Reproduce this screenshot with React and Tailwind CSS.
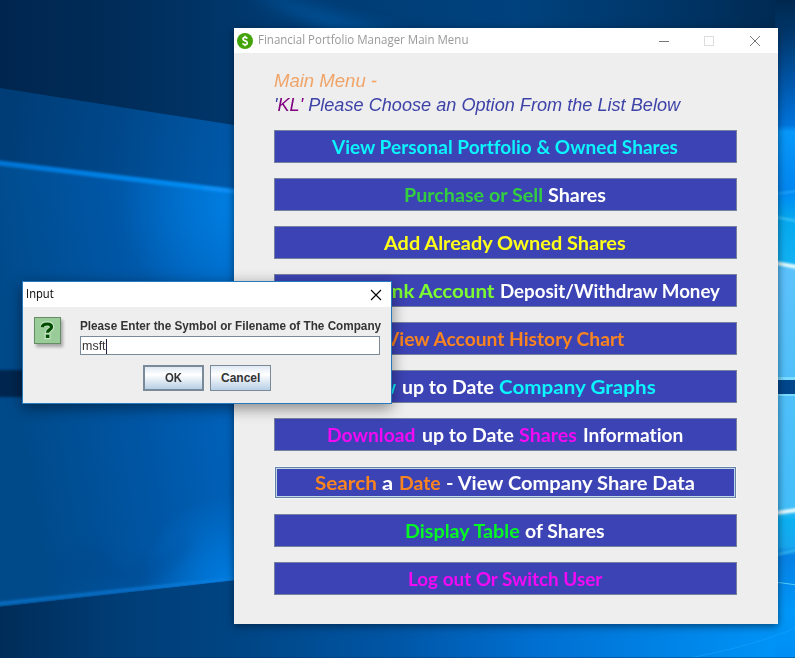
import { useLayoutEffect, useRef, useState } from "react";

// Scales a line of text horizontally so that it fills the given width.
function FitText({ width, className = "", children }) {
  const ref = useRef(null);
  const [scale, setScale] = useState(1);
  useLayoutEffect(() => {
    const measure = () => {
      const natural = ref.current?.offsetWidth;
      if (natural) setScale(width / natural);
    };
    measure();
    document.fonts?.ready.then(measure);
  }, [width]);
  return (
    <span className="inline-block text-left" style={{ width }}>
      <span
        ref={ref}
        className={`inline-block origin-left whitespace-pre ${className}`}
        style={{ transform: `scaleX(${scale})` }}
      >
        {children}
      </span>
    </span>
  );
}

const C = {
  cyan: "text-[#0cf4fe]",
  green: "text-[#32cd40]",
  white: "text-white",
  yellow: "text-[#ffff18]",
  lawn: "text-[#7cfc30]",
  orange: "text-[#fa8420]",
  magenta: "text-[#f20af4]",
  lime: "text-[#04f824]",
};

const options = [
  { parts: [["View Personal Portfolio & Owned Shares", C.cyan, 346]] },
  { parts: [["Purchase or Sell", C.green, 139], ["Shares", C.white, 58]] },
  { parts: [["Add Already Owned Shares", C.yellow, 242]] },
  { parts: [["Manage Bank Account", C.lawn, 204], ["Deposit/Withdraw Money", C.white, 220]] },
  { parts: [["View Account History Chart", C.orange, 238]] },
  { parts: [["View", C.cyan, 42], ["up to Date", C.white, 92], ["Company Graphs", C.cyan, 157]] },
  { parts: [["Download", C.magenta, 89], ["up to Date", C.white, 92], ["Shares", C.magenta, 58], ["Information", C.white, 100]] },
  { parts: [["Search", C.orange, 62], ["a", C.white, 11], ["Date", C.orange, 42], ["- View Company Share Data", C.white, 249]], focused: true },
  { parts: [["Display Table", C.lime, 115], ["of Shares", C.white, 80]] },
  { parts: [["Log out Or Switch User", C.magenta, 194]] },
];

function Option({ parts, focused }) {
  return (
    <button
      className={`flex w-[463px] items-center justify-center gap-[5.5px] bg-[#3c43b4] pr-px font-[Lato,sans-serif] text-[18px] leading-[26px] font-bold [font-variant-ligatures:none] ${
        focused
          ? "h-[33px] border border-[#f4f6f8] shadow-[inset_0_0_0_1px_#6382a5,inset_0_0_0_2px_#c3d6e8]"
          : "h-[33px] border border-[#75819e]"
      }`}
    >
      {parts.map(([text, color, width]) => (
        <FitText key={text} width={width} className={color}>
          {text}
        </FitText>
      ))}
    </button>
  );
}

function Wallpaper() {
  return (
    <svg className="absolute inset-0" width="795" height="658" viewBox="0 0 795 658">
      <defs>
        <linearGradient id="sky" x1="0" x2="1" y1="0" y2="0">
          <stop offset="0" stopColor="#00264f" />
          <stop offset=".15" stopColor="#002c59" />
          <stop offset=".35" stopColor="#003b72" />
          <stop offset=".65" stopColor="#00427e" />
          <stop offset=".85" stopColor="#003566" />
          <stop offset="1" stopColor="#00284f" />
        </linearGradient>
        <linearGradient id="beam" gradientUnits="userSpaceOnUse" x1="0" y1="130" x2="240" y2="160">
          <stop offset="0" stopColor="#003c75" />
          <stop offset=".5" stopColor="#00488b" />
          <stop offset="1" stopColor="#005aab" />
        </linearGradient>
        <linearGradient id="main" gradientUnits="userSpaceOnUse" x1="0" y1="300" x2="240" y2="260">
          <stop offset="0" stopColor="#004a8a" />
          <stop offset=".5" stopColor="#0056a5" />
          <stop offset="1" stopColor="#0066c2" />
        </linearGradient>
        <radialGradient id="glow" gradientUnits="userSpaceOnUse" cx="240" cy="205" r="120">
          <stop offset="0" stopColor="#0084ea" stopOpacity=".85" />
          <stop offset="1" stopColor="#0084ea" stopOpacity="0" />
        </radialGradient>
        <radialGradient id="glowLow" gradientUnits="userSpaceOnUse" cx="230" cy="585" r="90">
          <stop offset="0" stopColor="#0085ee" stopOpacity=".8" />
          <stop offset="1" stopColor="#0085ee" stopOpacity="0" />
        </radialGradient>
        <linearGradient id="edge" gradientUnits="userSpaceOnUse" x1="0" x2="240" y1="0" y2="0">
          <stop offset="0" stopColor="#0074d4" />
          <stop offset="1" stopColor="#0890f8" />
        </linearGradient>
        <linearGradient id="floor" x1="0" x2="1" y1="0" y2="0">
          <stop offset="0" stopColor="#002c58" />
          <stop offset=".15" stopColor="#003d76" />
          <stop offset=".3" stopColor="#004584" />
          <stop offset=".5" stopColor="#0056a6" />
          <stop offset=".68" stopColor="#0070d2" />
          <stop offset="1" stopColor="#0096fa" />
        </linearGradient>
        <linearGradient id="right" x1="0" x2="0" y1="0" y2="1">
          <stop offset="0" stopColor="#00284f" />
          <stop offset=".045" stopColor="#003567" />
          <stop offset=".12" stopColor="#0055a6" />
          <stop offset=".19" stopColor="#0074dc" />
          <stop offset=".2" stopColor="#0798fa" />
          <stop offset=".29" stopColor="#0386f0" />
          <stop offset=".3" stopColor="#0090f4" />
          <stop offset=".335" stopColor="#06a9ee" />
          <stop offset=".4" stopColor="#12b2f4" />
          <stop offset=".41" stopColor="#5cc2fc" />
          <stop offset=".77" stopColor="#44bef9" />
          <stop offset=".79" stopColor="#0cb1f2" />
          <stop offset=".83" stopColor="#18a8ef" />
          <stop offset=".845" stopColor="#0781e4" />
          <stop offset=".93" stopColor="#0098fa" />
          <stop offset="1" stopColor="#008ef4" />
        </linearGradient>
        <filter id="soft" filterUnits="userSpaceOnUse" x="-20" y="0" width="840" height="658">
          <feGaussianBlur stdDeviation="1.2" />
        </filter>
        <filter id="haze" filterUnits="userSpaceOnUse" x="-20" y="-40" width="840" height="740">
          <feGaussianBlur stdDeviation="7" />
        </filter>
      </defs>
      <rect width="795" height="658" fill="url(#sky)" />
      <path d="M245 -8 L300 2 L410 36 L340 36Z" fill="#005aa5" opacity=".6" filter="url(#haze)" />
      <path d="M0 88 L240 126 V210 H0Z" fill="url(#beam)" />
      <path d="M0 162 L240 192 V580 L0 607Z" fill="url(#main)" />
      <path d="M0 162 L240 192 V370 H0Z" fill="url(#glow)" />
      <path d="M0 450 H240 V579 L0 607Z" fill="url(#glowLow)" />
      <path d="M50 572 Q65 558 98 542 L122 566 Q160 564 188 532 L193 545 Q178 580 130 585Z" fill="#003f83" opacity=".22" filter="url(#haze)" />
      <path d="M-5 162.5 L240 192" stroke="url(#edge)" strokeWidth="5" filter="url(#soft)" />
      <path d="M-5 604 L240 578" stroke="#0a80e0" strokeWidth="4" opacity=".6" filter="url(#soft)" />
      <rect x="-10" y="370" width="40" height="27" fill="#002550" filter="url(#soft)" />
      <path d="M0 607 L240 580 H795 V658 H0Z" fill="url(#floor)" />
      <rect x="775" width="20" height="658" fill="url(#right)" />
      <g filter="url(#soft)">
        <path d="M775 194 L797 191" stroke="#22a7fb" strokeWidth="2" />
        <path d="M775 217 L797 221" stroke="#42c4fa" strokeWidth="2" />
        <path d="M775 263 L797 267" stroke="#e5fbff" strokeWidth="4" />
        <path d="M775 513 L797 510" stroke="#e5fbff" strokeWidth="4" />
        <path d="M775 555 L797 550" stroke="#35b9f0" strokeWidth="2" />
      </g>
      <path d="M775 582 L797 585" stroke="#52cdf8" strokeWidth="1" />
      <rect x="775" y="377" width="20" height="19" fill="#7bdcff" />
      <rect x="775" y="380" width="20" height="14" fill="#00478c" />
      <path d="M690 658 Q760 644 795 628" stroke="#1ca6ff" opacity=".5" fill="none" />
      <rect y="657" width="795" height="1" fill="#002d5c" opacity=".4" />
    </svg>
  );
}

function MainWindow() {
  return (
    <section className="absolute left-[234px] top-[28px] flex h-[596px] w-[544px] flex-col bg-[#eeeeee] shadow-[0_2px_8px_rgba(0,20,40,0.6)]">
      <header className="flex h-[25px] shrink-0 items-center bg-white pl-[3px] font-['Open_Sans',sans-serif] text-[12px] text-[#999999]">
        <svg width="16" height="16" viewBox="0 0 16 16">
          <circle cx="8" cy="8" r="8" fill="#43a409" />
          <path
            d="M10.3 5.4 Q9.5 4.4 8 4.4 Q5.9 4.4 5.9 6.1 Q5.9 7.4 8 7.9 Q10.3 8.4 10.3 9.9 Q10.3 11.6 8 11.6 Q6.3 11.6 5.5 10.4 M8 2.8 V4.4 M8 11.6 V13.2"
            fill="none"
            stroke="white"
            strokeWidth="1.6"
          />
        </svg>
        <span className="ml-[5px] flex pb-px">
          <FitText width={210}>Financial Portfolio Manager Main Menu</FitText>
        </span>
        <svg className="ml-auto mr-[17px]" width="103" height="12" viewBox="0 0 103 12" fill="none">
          <path d="M1 6.5 H11" stroke="#777" />
          <rect x="46.5" y="1.5" width="9" height="9" stroke="#dedede" />
          <path d="M92 1 L102 11 M102 1 L92 11" stroke="#777" />
        </svg>
      </header>
      <main className="flex flex-col pl-[40px] pt-[16px]">
        <h1 className="flex flex-col font-['Liberation_Sans',Arial,sans-serif] text-[18px] leading-6 text-[#3e43a8] italic">
          <FitText width={103} className="text-[#f0a468]">Main Menu -</FitText>
          <FitText width={406}>
            '<span className="text-[#800080]">KL'</span> Please Choose an Option From the List Below
          </FitText>
        </h1>
        <nav className="mt-[13px] flex flex-col gap-[15px]">
          {options.map((o, i) => (
            <Option key={i} {...o} />
          ))}
        </nav>
      </main>
    </section>
  );
}

function InputDialog() {
  const button =
    "flex h-[26px] w-[61px] items-center justify-center bg-linear-to-b from-[#dfe9f3] via-white via-35% to-[#b8cfe5]";
  return (
    <section className="absolute left-[22px] top-[281px] flex h-[123px] w-[370px] flex-col border border-[#2679bd] bg-[#eeeeee] shadow-[0_4px_14px_rgba(0,0,0,0.45)]">
      <header className="flex h-[25px] shrink-0 items-center justify-between bg-white pl-[3px] pr-[9px] font-['Open_Sans',sans-serif] text-[12px] text-black">
        <span className="flex pb-px">
          <FitText width={28}>Input</FitText>
        </span>
        <svg width="12" height="12" viewBox="0 0 12 12">
          <path d="M1 1 L11 11 M11 1 L1 11" stroke="black" strokeWidth="1.1" />
        </svg>
      </header>
      <div className="flex pl-[11px] pt-[10px]">
        <div className="flex h-[27px] w-[27px] items-center justify-center border border-[#668c66] bg-[#99cc99] shadow-[2px_3px_3px_rgba(0,0,0,0.3)]">
          <svg width="17" height="21" viewBox="0 0 17 21" fill="none">
            <path d="M3.7 7 Q3.7 3.7 8.3 3.7 Q12.7 3.7 12.7 7 Q12.7 9 10.3 10.1 Q8.5 11 8.5 13" stroke="#c5e5c5" strokeWidth="5" />
            <rect x="5.5" y="13.2" width="6" height="6" fill="#c5e5c5" />
            <path d="M3.3 7.2 Q3.5 4 8.3 4 Q12.5 4 12.5 7 Q12.5 8.8 10.3 10 Q8.5 11 8.5 12.7" stroke="#004b00" strokeWidth="3.2" />
            <rect x="6.8" y="14.6" width="3.6" height="3.4" fill="#004b00" />
          </svg>
        </div>
        <label className="ml-[19px] flex w-[302px] flex-col font-['Liberation_Sans',Arial,sans-serif] text-[12px] leading-[18px] font-bold text-[#333333]">
          <FitText width={301}>Please Enter the Symbol or Filename of The Company</FitText>
          <span className="mt-px flex h-[19px] w-[300px] items-center border border-[#7a8a99] bg-white pl-px pt-px text-[13px] font-normal">
            <FitText width={24}>msft</FitText>
            <span className="h-[15px] w-px bg-[#222244]" />
          </span>
        </label>
      </div>
      <footer className="mt-[10px] flex gap-[6px] pl-[120px] font-['Liberation_Sans',Arial,sans-serif] text-[12px] font-bold text-[#333333]">
        <button className={`${button} border-2 border-[#7a8a99]`}>
          <FitText width={17}>OK</FitText>
        </button>
        <button className={`${button} border border-[#7a8a99]`}>
          <FitText width={39}>Cancel</FitText>
        </button>
      </footer>
    </section>
  );
}

export default function App() {
  return (
    <div className="relative h-[658px] w-[795px] overflow-hidden bg-[#003b72]">
      <Wallpaper />
      <MainWindow />
      <InputDialog />
    </div>
  );
}
